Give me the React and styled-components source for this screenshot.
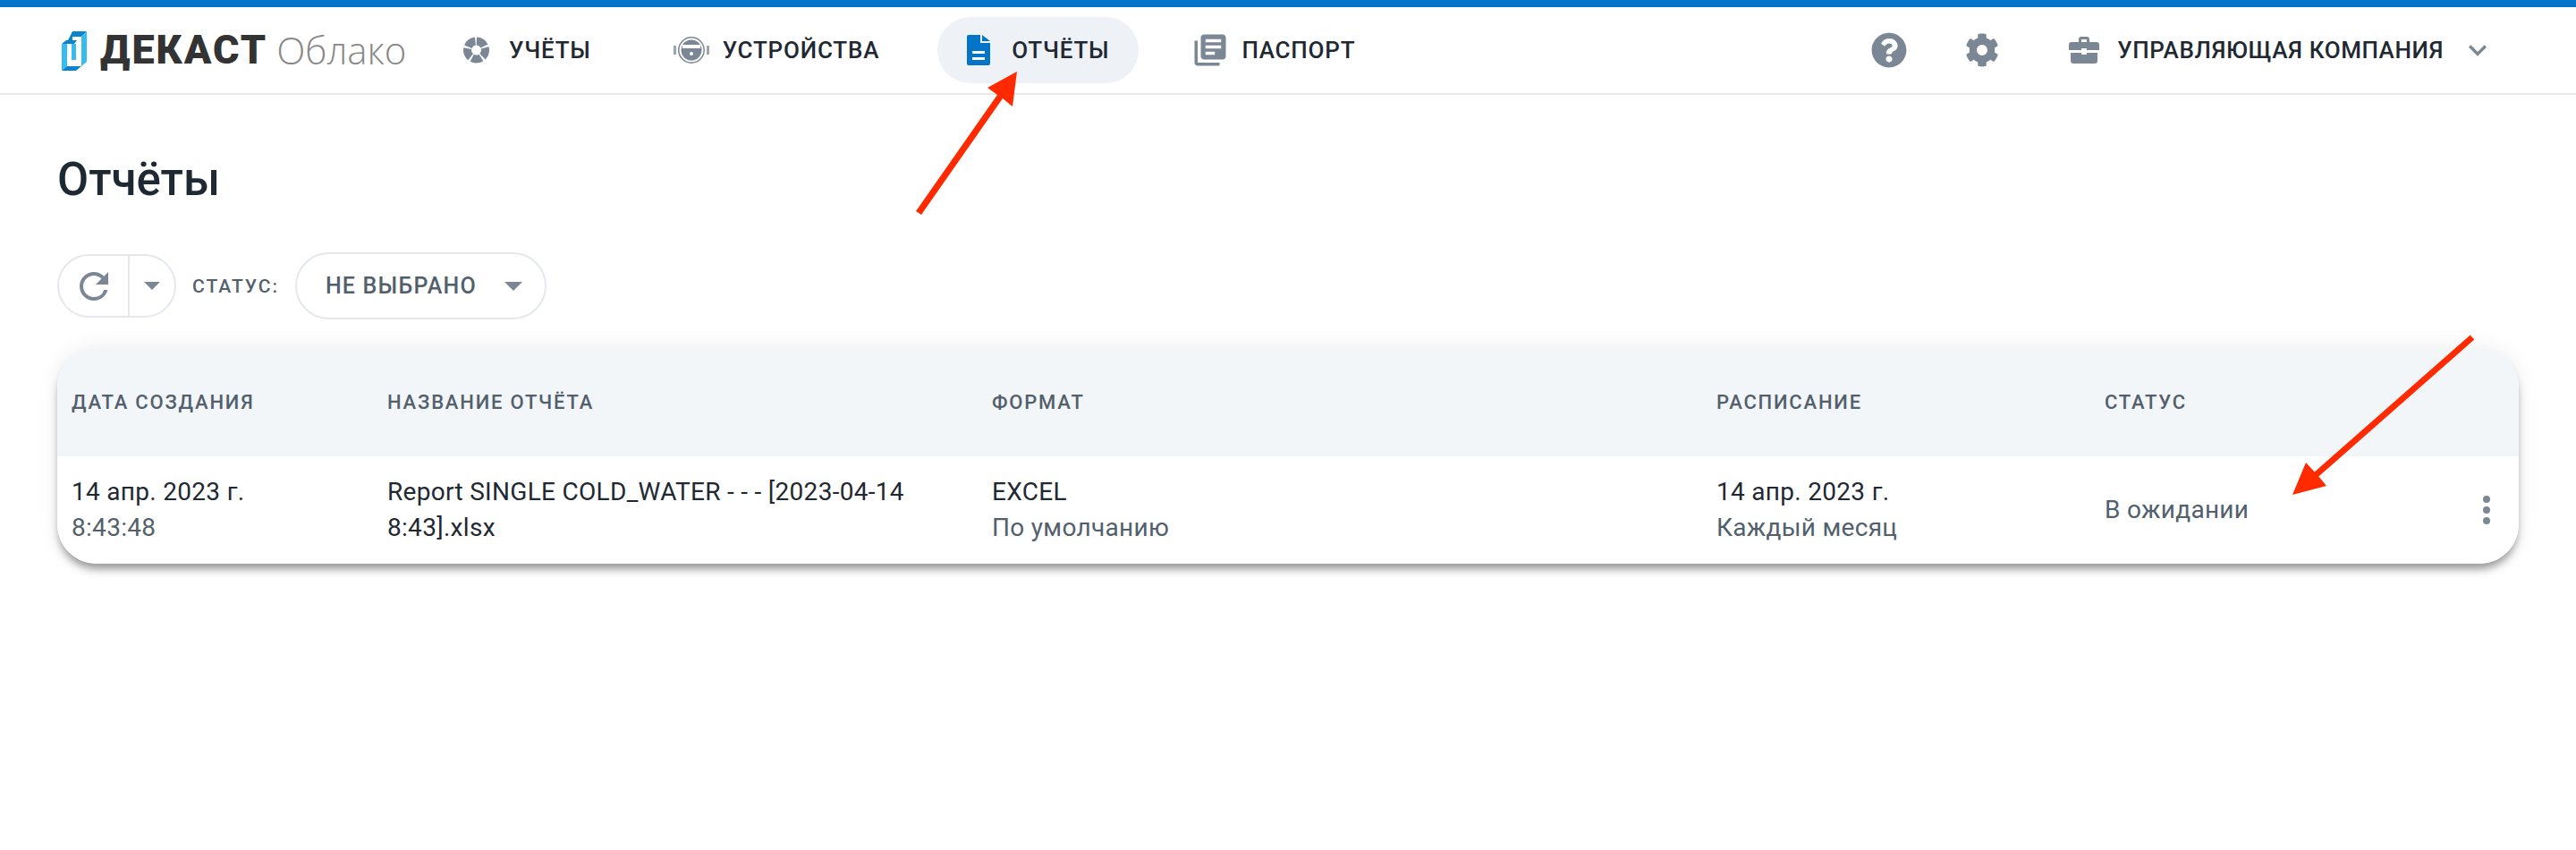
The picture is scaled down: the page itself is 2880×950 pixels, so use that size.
import React from "react";
import styled, { createGlobalStyle } from "styled-components";
import { FaQuestionCircle, FaCog } from "react-icons/fa";
import { MdLibraryBooks, MdRefresh, MdKeyboardArrowDown } from "react-icons/md";

const GlobalStyle = createGlobalStyle`
  html, body {
    margin: 0;
    background: #fff;
    font-family: Roboto, "Liberation Sans", sans-serif;
    color: #1f2933;
  }
  #root {
    position: relative;
    min-height: 950px;
  }
`;

const Header = styled.header`
  display: flex;
  align-items: center;
  height: 96px;
  border-top: 8px solid #0275c9;
  border-bottom: 2px solid #e4e8ec;
  padding: 0 90px 0 69px;
`;

const Logo = styled.div`
  display: flex;
  align-items: center;
  width: 422px;
`;

const LogoName = styled.span`
  margin-left: 15px;
  font-family: Roboto, sans-serif;
  font-weight: 900;
  font-size: 45px;
  line-height: 46px;
  color: #333;
  letter-spacing: 2px;
`;

const LogoSuffix = styled.span`
  margin-left: 10px;
  font-family: "Open Sans", sans-serif;
  font-weight: 300;
  font-size: 42px;
  line-height: 46px;
  color: #888;
`;

const Nav = styled.nav`
  display: flex;
  align-items: center;
  gap: 28px;
`;

const NavItem = styled.div`
  display: flex;
  align-items: center;
  height: 74px;
  gap: ${(p) => p.$gap || 22}px;
  padding: 0 ${(p) => (p.$active ? 33 : 37)}px 0 ${(p) => p.$pl || 27}px;
  border-radius: 37px;
  background: ${(p) => (p.$active ? "#eef1f5" : "transparent")};
  font-size: 26px;
  font-weight: 500;
  letter-spacing: 0.8px;
  white-space: nowrap;
`;

const RightSide = styled.div`
  display: flex;
  align-items: center;
  margin-left: auto;
  color: #7b8794;
`;

const IconSlot = styled.div`
  display: flex;
  margin-right: ${(p) => p.$mr}px;
`;

const CompanyName = styled.span`
  margin: 0 18px 0 20px;
  font-size: 26px;
  font-weight: 500;
  letter-spacing: 0.6px;
  color: #1f2933;
  white-space: nowrap;
`;

const Main = styled.main`
  padding: 0 64px;
`;

const Title = styled.h1`
  margin: 66px 0 0;
  font-size: 51px;
  line-height: 58px;
  font-weight: 500;
  color: #1f2933;
`;

const Toolbar = styled.div`
  display: flex;
  align-items: center;
  margin-top: 52px;
`;

const ButtonGroup = styled.div`
  display: flex;
  align-items: stretch;
  width: 133px;
  height: 71px;
  box-sizing: border-box;
  border: 2px solid #e4e8ec;
  border-radius: 36px;
  color: #7b8794;
`;

const GroupMain = styled.div`
  display: flex;
  align-items: center;
  justify-content: center;
  width: 77px;
  border-right: 2px solid #e4e8ec;
`;

const GroupCaret = styled.div`
  display: flex;
  flex: 1;
  align-items: center;
  justify-content: center;
`;

const Caret = styled.span`
  display: block;
  width: 0;
  height: 0;
  border-style: solid;
  border-width: ${(p) => p.$h}px ${(p) => p.$w}px 0;
  border-color: #7b8794 transparent transparent;
`;

const FilterLabel = styled.span`
  margin: 0 18px;
  font-size: 21px;
  font-weight: 500;
  letter-spacing: 2px;
  color: #52606d;
`;

const Select = styled.div`
  display: flex;
  align-items: center;
  justify-content: space-between;
  width: 281px;
  height: 75px;
  box-sizing: border-box;
  border: 2px solid #e4e8ec;
  border-radius: 38px;
  padding: 0 25px 0 32px;
  font-size: 25px;
  font-weight: 500;
  letter-spacing: 1.2px;
  color: #52606d;
`;

const Card = styled.section`
  margin-top: 32px;
  border-radius: 44px;
  overflow: hidden;
  background: #fff;
  box-shadow: 0 0 24px rgba(0, 0, 0, 0.08), 0 8px 10px -2px rgba(0, 0, 0, 0.38);
`;

const Row = styled.div`
  display: grid;
  grid-template-columns: 353px 676px 810px 434px 1fr 72px;
  height: ${(p) => p.$h}px;
  background: ${(p) => p.$bg || "#fff"};
`;

const HeadCell = styled.div`
  display: flex;
  align-items: center;
  padding-left: 16px;
  font-size: 22px;
  font-weight: 500;
  letter-spacing: 1.8px;
  color: #52606d;
  white-space: nowrap;
`;

const Cell = styled.div`
  display: flex;
  flex-direction: column;
  justify-content: center;
  padding-left: 16px;
  font-size: 28px;
  line-height: 40px;
  letter-spacing: 0.3px;
  color: ${(p) => (p.$muted ? "#52606d" : "#1f2933")};
`;

const Sub = styled.span`
  color: #52606d;
`;

const MenuDots = styled.div`
  display: flex;
  flex-direction: column;
  align-items: center;
  justify-content: center;
  gap: 4px;
`;

const Dot = styled.span`
  width: 8px;
  height: 8px;
  border-radius: 50%;
  background: #7b8794;
`;

const ArrowLayer = styled.svg`
  position: absolute;
  top: 0;
  left: 0;
  width: 2880px;
  height: 950px;
  pointer-events: none;
`;

const LogoMark = () => (
  <svg width="28" height="45" viewBox="0 0 28 45">
    <path d="M7 11 L12 1 H28 L22 7 H12 V11 Z" fill="#0b84cf" />
    <path d="M22 7 L28 1 V35 L22 40 Z" fill="#35bdf2" />
    <path d="M0 15 L5 11 H17 L14 15 Z" fill="#0b84cf" />
    <path d="M0 15 H6 V40 L0 45 Z" fill="#35bdf2" />
    <path d="M11 15 H16 V33 H11 Z" fill="#35bdf2" />
    <path d="M0 45 L6 40 H22 L16 45 Z" fill="#0b84cf" />
  </svg>
);

const AccountsIcon = () => (
  <svg width="29" height="30" viewBox="0 0 29 30" fill="none" stroke="#7b8794" strokeWidth="9">
    <circle cx="14.5" cy="15" r="10" strokeDasharray="10.6 2" transform="rotate(-88 14.5 15)" />
  </svg>
);

const DeviceIcon = () => (
  <svg width="40" height="30" viewBox="0 0 40 30">
    <rect x="0" y="10" width="3" height="10" fill="#9aa5b1" />
    <rect x="37" y="10" width="3" height="10" fill="#9aa5b1" />
    <circle cx="20" cy="15" r="14.2" fill="none" stroke="#7b8794" strokeWidth="1.5" />
    <circle cx="20" cy="15" r="11.5" fill="#7b8794" />
    <rect x="10" y="9" width="20" height="4" fill="#fff" />
    <circle cx="20" cy="19" r="2" fill="#fff" />
  </svg>
);

const ReportIcon = () => (
  <svg width="26" height="34" viewBox="0 0 26 34">
    <path
      d="M2 0 H15 V9 H26 V32 a2 2 0 0 1-2 2 H2 a2 2 0 0 1-2-2 V2 a2 2 0 0 1 2-2 Z M17 0 L26 7 H17 Z"
      fill="#0275c9"
    />
    <rect x="6" y="18" width="14" height="3" fill="#fff" />
    <rect x="6" y="25" width="14" height="3" fill="#fff" />
  </svg>
);

const BriefcaseIcon = () => (
  <svg width="34" height="30" viewBox="0 0 34 30" fill="#7b8794">
    <path d="M11 7 V3 a3 3 0 0 1 3-3 h6 a3 3 0 0 1 3 3 v4 h-3 V3 h-6 v4 Z" />
    <path d="M3 6 H31 a3 3 0 0 1 3 3 V15 H20 V13 H14 V15 H0 V9 a3 3 0 0 1 3-3 Z" />
    <path d="M2 18 H14 V20 H20 V18 H32 V27 a3 3 0 0 1-3 3 H5 a3 3 0 0 1-3-3 Z" />
  </svg>
);

export default function App() {
  return (
    <>
      <GlobalStyle />
      <Header>
        <Logo>
          <LogoMark />
          <LogoName>ДЕКАСТ</LogoName>
          <LogoSuffix>Облако</LogoSuffix>
        </Logo>
        <Nav>
          <NavItem>
            <AccountsIcon />
            УЧЁТЫ
          </NavItem>
          <NavItem $gap={15}>
            <DeviceIcon />
            УСТРОЙСТВА
          </NavItem>
          <NavItem $active $pl={33} $gap={24}>
            <ReportIcon />
            ОТЧЁТЫ
          </NavItem>
          <NavItem $pl={31} $gap={14}>
            <MdLibraryBooks size={42} color="#7b8794" />
            ПАСПОРТ
          </NavItem>
        </Nav>
        <RightSide>
          <IconSlot $mr={65}>
            <FaQuestionCircle size={40} />
          </IconSlot>
          <IconSlot $mr={78}>
            <FaCog size={38} />
          </IconSlot>
          <BriefcaseIcon />
          <CompanyName>УПРАВЛЯЮЩАЯ КОМПАНИЯ</CompanyName>
          <MdKeyboardArrowDown size={40} />
        </RightSide>
      </Header>
      <Main>
        <Title>Отчёты</Title>
        <Toolbar>
          <ButtonGroup>
            <GroupMain>
              <MdRefresh size={48} />
            </GroupMain>
            <GroupCaret>
              <Caret $w={9} $h={9} />
            </GroupCaret>
          </ButtonGroup>
          <FilterLabel>СТАТУС:</FilterLabel>
          <Select>
            НЕ ВЫБРАНО
            <Caret $w={10} $h={10} />
          </Select>
        </Toolbar>
        <Card>
          <Row $h={121} $bg="#f3f6f9">
            <HeadCell>ДАТА СОЗДАНИЯ</HeadCell>
            <HeadCell>НАЗВАНИЕ ОТЧЁТА</HeadCell>
            <HeadCell>ФОРМАТ</HeadCell>
            <HeadCell>РАСПИСАНИЕ</HeadCell>
            <HeadCell>СТАТУС</HeadCell>
            <HeadCell />
          </Row>
          <Row $h={120}>
            <Cell>
              14 апр. 2023 г.
              <Sub>8:43:48</Sub>
            </Cell>
            <Cell>Report SINGLE COLD_WATER - - - [2023-04-14 8:43].xlsx</Cell>
            <Cell>
              EXCEL
              <Sub>По умолчанию</Sub>
            </Cell>
            <Cell>
              14 апр. 2023 г.
              <Sub>Каждый месяц</Sub>
            </Cell>
            <Cell $muted>В ожидании</Cell>
            <MenuDots>
              <Dot />
              <Dot />
              <Dot />
            </MenuDots>
          </Row>
        </Card>
      </Main>
      <ArrowLayer viewBox="0 0 2880 950">
        <path d="M1024 236 L1115 106 L1104 98 L1137 80 L1132 119 L1121 110 L1030 240 Z" fill="#ff2a00" />
        <path d="M2761.7 374.4 L2587.7 527.4 L2578 517 L2563 553 L2601 543 L2592.3 532.6 L2766.3 379.6 Z" fill="#ff2a00" />
      </ArrowLayer>
    </>
  );
}
